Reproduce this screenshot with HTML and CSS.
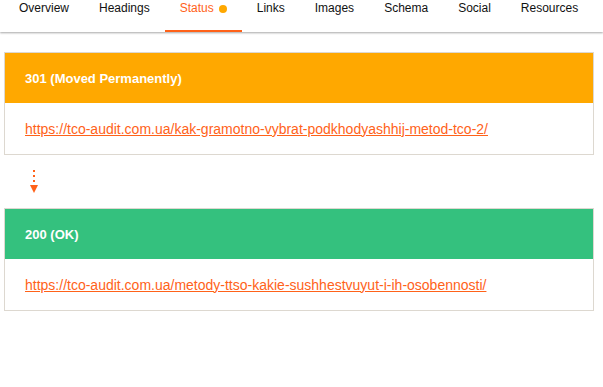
FILE: index.html
```html
<!DOCTYPE html>
<html lang="en">
<head>
  <meta charset="UTF-8">
  <meta name="viewport" content="width=device-width, initial-scale=1.0">
  <title>Status</title>
  <link rel="stylesheet" href="styles.css">
</head>
<body>

  <nav class="tabs">
    <a class="tab">Overview</a>
    <a class="tab">Headings</a>
    <a class="tab tab-active">Status <span class="tab-dot"></span></a>
    <a class="tab">Links</a>
    <a class="tab">Images</a>
    <a class="tab">Schema</a>
    <a class="tab">Social</a>
    <a class="tab">Resources</a>
  </nav>

  <div class="container">

    <div class="status-card">
      <div class="status-head status-redirect">301 (Moved Permanently)</div>
      <div class="status-body">
        <a href="#" class="status-url">https://tco-audit.com.ua/kak-gramotno-vybrat-podkhodyashhij-metod-tco-2/</a>
      </div>
    </div>

    <div class="status-arrow">
      <span class="arrow-line"></span>
      <span class="arrow-head"></span>
    </div>

    <div class="status-card">
      <div class="status-head status-ok">200 (OK)</div>
      <div class="status-body">
        <a href="#" class="status-url">https://tco-audit.com.ua/metody-ttso-kakie-sushhestvuyut-i-ih-osobennosti/</a>
      </div>
    </div>

  </div>

</body>
</html>
```

FILE: styles.css
```css
* {
  box-sizing: border-box;
}
body {
  margin: 0;
  padding: 0;
  font-family: "Liberation Sans", Arial, sans-serif;
  background: white;
  color: #222;
}

.tabs {
  display: flex;
  height: 32px;
  padding-left: 4px;
  background: white;
  box-shadow: 0 1px 2px rgba(0, 0, 0, 0.35);
}
.tab {
  display: flex;
  align-items: flex-start;
  padding: 0 15px;
  font-size: 12px;
  line-height: 16px;
  color: #111;
  border-bottom: 2px solid transparent;
  cursor: pointer;
}
.tab-active {
  color: #ff6219;
  border-bottom-color: #ff6219;
}
.tab-dot {
  display: inline-block;
  width: 8px;
  height: 8px;
  margin: 5px 0 0 5px;
  border-radius: 50%;
  background: #ffa800;
}

.container {
  padding: 20px 9px 0 4px;
}

.status-card {
  border: 1px solid #ddd8d0;
}
.status-head {
  height: 50px;
  padding: 0 20px;
  display: flex;
  align-items: center;
  color: white;
  font-size: 13px;
  font-weight: bold;
}
.status-redirect {
  background: #ffa800;
}
.status-ok {
  background: #34c17e;
}
.status-body {
  height: 51px;
  padding: 0 20px;
  display: flex;
  align-items: center;
}
.status-url {
  font-size: 14px;
  color: #ff6219;
  text-decoration: underline;
}

.status-arrow {
  height: 53px;
  width: 8px;
  margin-left: 26px;
  padding-top: 15px;
  display: flex;
  flex-direction: column;
  align-items: center;
}
.arrow-line {
  width: 2px;
  height: 15px;
  background: repeating-linear-gradient(to bottom, #ff6219 0 2px, transparent 2px 5px);
}
.arrow-head {
  width: 0;
  height: 0;
  border-left: 4px solid transparent;
  border-right: 4px solid transparent;
  border-top: 8px solid #ff6219;
}
```
